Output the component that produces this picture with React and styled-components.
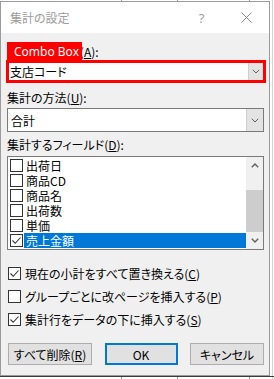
import React from 'react'
import styled, { createGlobalStyle } from 'styled-components'

const GlobalStyle = createGlobalStyle`
  html, body {
    margin: 0;
    padding: 0;
    background: #fff;
    overflow: hidden;
  }
  body {
    font-family: "Noto Sans CJK JP", "Noto Sans", sans-serif;
    font-size: 12px;
    font-feature-settings: "palt";
  }
`

const Desk = styled.div`
  width: 274px;
  height: 379px;
  background-color: #fff;
  background-image:
    linear-gradient(#3a3a3a, #3a3a3a),
    linear-gradient(#d0d0d0, #d0d0d0),
    linear-gradient(90deg, transparent 121px, #9a9a9a 121px, #9a9a9a 122px, transparent 122px, transparent 177px, #9a9a9a 177px, #9a9a9a 178px, transparent 178px, transparent 249px, #9a9a9a 249px, #9a9a9a 250px, transparent 250px);
  background-size: 274px 1px, 1px 379px, 274px 379px;
  background-position: 0 376px, 272px 0, 0 0;
  background-repeat: no-repeat;
  padding-top: 1px;
  box-sizing: border-box;
`

const Dialog = styled.div`
  width: 270px;
  height: 375px;
  box-sizing: border-box;
  border: 1px solid #9b9b9b;
  background: #f0f0f0;
  display: flex;
  flex-direction: column;
`

const TitleBar = styled.div`
  height: 31px;
  flex: none;
  background: #fff;
  display: flex;
  align-items: center;
  color: #9c9c9c;
`

const Title = styled.div`
  flex: 1;
  padding-left: 9px;
  font-size: 12px;
`

const CaptionBtn = styled.div`
  width: 45px;
  height: 31px;
  display: flex;
  align-items: center;
  justify-content: center;
  color: #9c9c9c;
  font-size: 13px;
  font-family: "Noto Sans", sans-serif;
`

const Body = styled.div`
  flex: 1;
  display: flex;
  flex-direction: column;
  padding: 9px 5px 0 6px;
`

const LabelRow = styled.div`
  position: relative;
  height: 18px;
  display: flex;
  align-items: center;
  margin-top: ${p => p.$gap || 0}px;
  margin-bottom: ${p => p.$after || 0}px;
  color: #000;
`

const Hidden = styled.span`
  letter-spacing: -1px;
`

const Key = styled.span`
  text-decoration: underline;
  text-underline-offset: 1px;
`

const Badge = styled.div`
  position: absolute;
  left: 0;
  top: 0;
  width: 75px;
  height: 18px;
  background: #ff0000;
  color: #fff;
  font-family: "Noto Sans", sans-serif;
  font-size: 12px;
  display: flex;
  align-items: center;
  padding-left: 7px;
  box-sizing: border-box;
  white-space: nowrap;
  overflow: hidden;
`

const Combo = styled.div`
  height: ${p => (p.$highlight ? 23 : 24)}px;
  box-sizing: border-box;
  border: ${p => (p.$highlight ? '3px solid #ff0000' : '1px solid #7a7a7a')};
  margin: ${p => (p.$highlight ? '0 -2px 0 -1px' : '0 0 0 0')};
  background: #fff;
  display: flex;
  align-items: stretch;
`

const ComboText = styled.div`
  flex: 1;
  display: flex;
  align-items: center;
  padding-left: ${p => (p.$highlight ? 1 : 3)}px;
  color: #000;
`

const DropBtn = styled.div`
  width: ${p => (p.$highlight ? 14 : 16)}px;
  background: #e3e3e3;
  border-left: 1px solid #cfcfcf;
  display: flex;
  align-items: center;
  justify-content: center;
`

const List = styled.div`
  height: 94px;
  box-sizing: border-box;
  border: 1px solid #7a7a7a;
  background: #fff;
  display: flex;
`

const Items = styled.div`
  flex: 1;
  padding: 1px 0;
`

const Item = styled.div`
  height: 15px;
  line-height: 15px;
  display: flex;
  align-items: center;
  padding-left: 2px;
`

const ItemText = styled.div`
  flex: 1;
  height: 15px;
  line-height: 15px;
  overflow: hidden;
  display: flex;
  align-items: center;
  margin-left: 1px;
  padding-left: 2px;
  background: ${p => (p.$selected ? '#0078d7' : 'transparent')};
  color: ${p => (p.$selected ? '#fff' : '#000')};
`

const ScrollBar = styled.div`
  width: 17px;
  background: #f0f0f0;
  display: flex;
  flex-direction: column;
`

const ScrollArrow = styled.div`
  height: 17px;
  display: flex;
  align-items: center;
  justify-content: center;
`

const Track = styled.div`
  flex: 1;
  display: flex;
  flex-direction: column;
  justify-content: flex-end;
`

const Thumb = styled.div`
  height: 42px;
  background: #cdcdcd;
`

const Box = styled.span`
  width: 13px;
  height: 13px;
  flex: none;
  box-sizing: border-box;
  border: 1px solid #333;
  background: #fff;
  display: flex;
  align-items: center;
  justify-content: center;
`

const Options = styled.div`
  margin-top: 15px;
  display: flex;
  flex-direction: column;
  gap: 7px;
`

const Option = styled.label`
  height: 16px;
  display: flex;
  align-items: center;
  gap: 4px;
  padding-left: 1px;
  color: #000;
`

const Buttons = styled.div`
  margin-top: 16px;
  display: flex;
  justify-content: space-between;
  padding-left: 1px;
`

const Button = styled.div`
  width: ${p => p.$w}px;
  height: 22px;
  box-sizing: border-box;
  background: #e1e1e1;
  border: ${p => (p.$default ? '2px solid #0078d7' : '1px solid #adadad')};
  display: flex;
  align-items: center;
  justify-content: center;
  color: #000;
`

const Check = ({ color = '#333' }) => (
  <svg width="11" height="11" viewBox="0 0 11 11">
    <polyline points="1.5,5.5 4.2,8.3 9.5,2.5" fill="none" stroke={color} strokeWidth="1.1" />
  </svg>
)

const CheckBox = ({ checked }) => <Box>{checked && <Check />}</Box>

const Chevron = ({ up, size = 8, color = '#606060', width = 1.4 }) => (
  <svg width={size} height={size / 2 + 1} viewBox="0 0 8 5">
    <polyline
      points={up ? '0.8,4.2 4,1 7.2,4.2' : '0.8,0.8 4,4 7.2,0.8'}
      fill="none"
      stroke={color}
      strokeWidth={width}
    />
  </svg>
)

const fields = [
  { name: '出荷日' },
  { name: '商品CD' },
  { name: '商品名' },
  { name: '出荷数' },
  { name: '単価' },
  { name: '売上金額', checked: true, selected: true },
]

const options = [
  { text: '現在の小計をすべて置き換える', key: 'C', checked: true },
  { text: 'グループごとに改ページを挿入する', key: 'P' },
  { text: '集計行をデータの下に挿入する', key: 'S', checked: true },
]

export default function App() {
  return (
    <Desk>
      <GlobalStyle />
      <Dialog>
        <TitleBar>
          <Title>集計の設定</Title>
          <CaptionBtn>?</CaptionBtn>
          <CaptionBtn>
            <svg width="11" height="11" viewBox="0 0 11 11">
              <path d="M0.5 0.5 L10.5 10.5 M10.5 0.5 L0.5 10.5" stroke="#8a8a8a" strokeWidth="1" />
            </svg>
          </CaptionBtn>
        </TitleBar>
        <Body>
          <LabelRow>
            <span><Hidden>グループの基準</Hidden>(<Key>A</Key>):</span>
            <Badge>Combo Box</Badge>
          </LabelRow>
          <Combo $highlight>
            <ComboText $highlight>支店コード</ComboText>
            <DropBtn $highlight>
              <Chevron size={8} width={1} />
            </DropBtn>
          </Combo>

          <LabelRow $gap={5} $after={2}>
            <span>集計の方法(<Key>U</Key>):</span>
          </LabelRow>
          <Combo>
            <ComboText>合計</ComboText>
            <DropBtn>
              <Chevron size={8} width={1} />
            </DropBtn>
          </Combo>

          <LabelRow $gap={3} $after={3}>
            <span>集計するフィールド(<Key>D</Key>):</span>
          </LabelRow>
          <List>
            <Items>
              {fields.map(f => (
                <Item key={f.name}>
                  <CheckBox checked={f.checked} />
                  <ItemText $selected={f.selected}>{f.name}</ItemText>
                </Item>
              ))}
            </Items>
            <ScrollBar>
              <ScrollArrow>
                <Chevron up />
              </ScrollArrow>
              <Track>
                <Thumb />
              </Track>
              <ScrollArrow>
                <Chevron />
              </ScrollArrow>
            </ScrollBar>
          </List>

          <Options>
            {options.map(o => (
              <Option key={o.key}>
                <CheckBox checked={o.checked} />
                <span>
                  {o.text}(<Key>{o.key}</Key>)
                </span>
              </Option>
            ))}
          </Options>

          <Buttons>
            <Button $w={84}>
              <span>すべて削除(<Key>R</Key>)</span>
            </Button>
            <Button $w={73} $default>OK</Button>
            <Button $w={74}>キャンセル</Button>
          </Buttons>
        </Body>
      </Dialog>
    </Desk>
  )
}
